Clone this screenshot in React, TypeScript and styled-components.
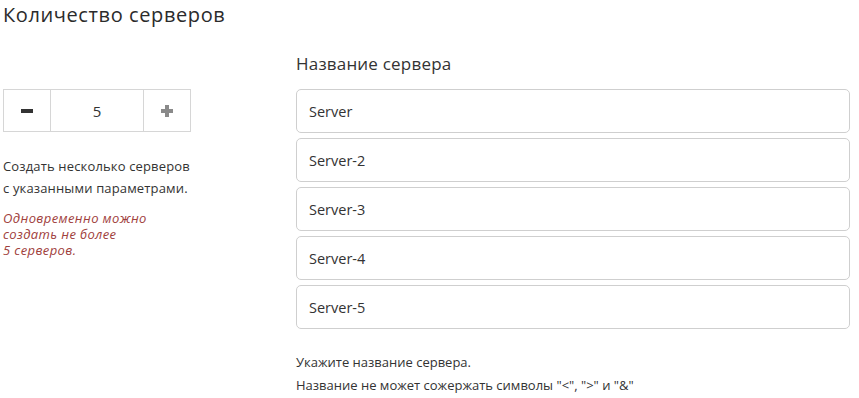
import React, { useState } from "react";
import styled, { createGlobalStyle } from "styled-components";

const GlobalStyle = createGlobalStyle`
  body {
    margin: 0;
    background: #fff;
    font-family: "Open Sans", "Noto Sans", sans-serif;
    color: #333;
  }
`;

const Page = styled.div`
  padding: 0 9px 0 3px;
`;

const Title = styled.h2`
  margin: 0;
  padding-top: 1px;
  font-size: 20px;
  letter-spacing: 0.6px;
  line-height: 28px;
  font-weight: 400;
  color: #2b2b2b;
`;

const Layout = styled.div`
  display: grid;
  grid-template-columns: 188px 1fr;
  column-gap: 105px;
  margin-top: 23px;
`;

const LeftColumn = styled.div`
  padding-top: 37px;
`;

const RightColumn = styled.div``;

const FieldLabel = styled.div`
  font-size: 17px;
  letter-spacing: 0.2px;
  line-height: 24px;
  color: #333;
  margin-bottom: 13px;
`;

const Stepper = styled.div`
  display: grid;
  grid-template-columns: 46px 1fr 46px;
  height: 43px;
  border: 1px solid #d6d6d6;
  box-sizing: border-box;
`;

const StepButton = styled.button`
  display: flex;
  align-items: center;
  justify-content: center;
  padding: 0;
  border: none;
  background: #fff;
  cursor: pointer;
`;

const CountValue = styled.div`
  display: flex;
  align-items: center;
  justify-content: center;
  border-left: 1px solid #d6d6d6;
  border-right: 1px solid #d6d6d6;
  font-size: 15px;
  color: #333;
`;

const Hint = styled.div`
  margin-top: 23px;
  font-size: 13px;
  letter-spacing: 0.15px;
  line-height: 22px;
  white-space: nowrap;
  color: #333;
`;

const Warning = styled.div`
  margin-top: 11px;
  font-size: 13px;
  letter-spacing: 0.4px;
  line-height: 16px;
  font-style: italic;
  white-space: nowrap;
  color: #a0403c;
`;

const NameList = styled.div`
  display: flex;
  flex-direction: column;
  gap: 5px;
`;

const NameInput = styled.input`
  box-sizing: border-box;
  height: 44px;
  width: 100%;
  padding: 0 12px;
  border: 1px solid #cfcfcf;
  border-radius: 5px;
  font-family: inherit;
  font-size: 14.5px;
  color: #333;
  outline: none;
`;

const Note = styled.div`
  margin-top: 22px;
  font-size: 13px;
  line-height: 23px;
  color: #333;
`;

const Glyph = ({ plus }: { plus?: boolean }) => (
  <svg width="14" height="14" viewBox="0 0 14 14">
    <rect x="1" y="5" width="12" height="4" fill={plus ? "#8a8a8a" : "#333"} />
    {plus && <rect x="5" y="1" width="4" height="12" fill="#8a8a8a" />}
  </svg>
);

export default function App() {
  const [count, setCount] = useState(5);
  const names = ["Server", "Server-2", "Server-3", "Server-4", "Server-5"];

  return (
    <>
      <GlobalStyle />
      <Page>
        <Title>Количество серверов</Title>
        <Layout>
          <LeftColumn>
            <Stepper>
              <StepButton onClick={() => setCount(Math.max(1, count - 1))}>
                <Glyph />
              </StepButton>
              <CountValue>{count}</CountValue>
              <StepButton onClick={() => setCount(Math.min(5, count + 1))}>
                <Glyph plus />
              </StepButton>
            </Stepper>
            <Hint>
              Создать несколько серверов
              <br />с указанными параметрами.
            </Hint>
            <Warning>
              Одновременно можно
              <br />
              создать не более
              <br />5 серверов.
            </Warning>
          </LeftColumn>
          <RightColumn>
            <FieldLabel>Название сервера</FieldLabel>
            <NameList>
              {names.map((n) => (
                <NameInput key={n} defaultValue={n} />
              ))}
            </NameList>
            <Note>
              Укажите название сервера.
              <br />
              Название не может сожержать символы "&lt;", "&gt;" и "&amp;"
            </Note>
          </RightColumn>
        </Layout>
      </Page>
    </>
  );
}
